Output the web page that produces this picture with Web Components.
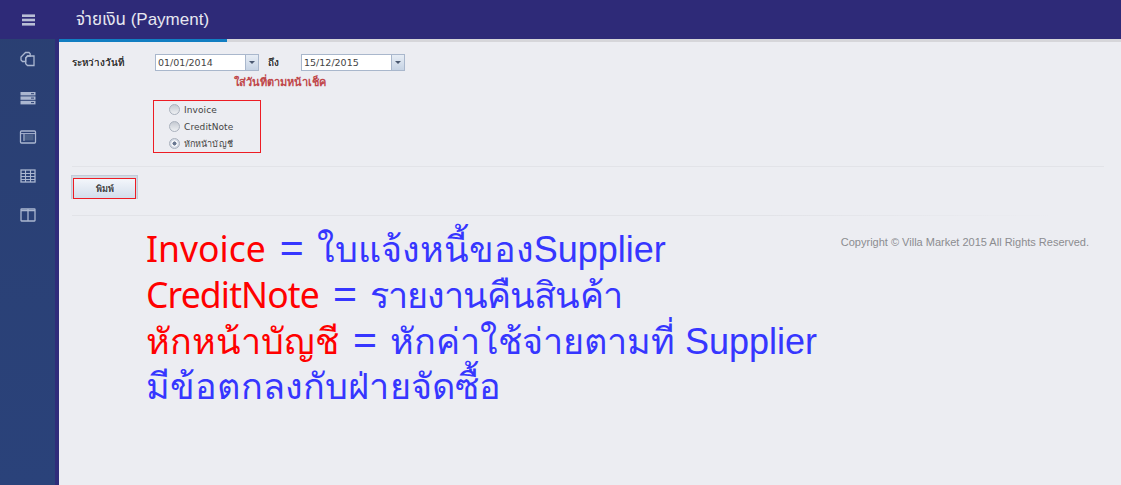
<!DOCTYPE html>
<html><head><meta charset="utf-8"><style>
html,body{margin:0;padding:0;height:100%;background:#ecedf2}
body{font-family:"Liberation Sans",Arial,"Noto Sans Thai","Noto Sans",sans-serif;overflow:hidden}
</style></head><body>
<app-shell>
<side-bar slot="side"></side-bar>
<top-bar slot="top" title-text="จ่ายเงิน (Payment)"></top-bar>
<payment-form></payment-form>
<page-footer-note></page-footer-note>
</app-shell>
<script>
function def(name,html){customElements.define(name,class extends HTMLElement{constructor(){super();this.attachShadow({mode:'open'}).innerHTML=html.replace('%T',this.getAttribute('title-text')||'')}})}
def('app-shell',`<style>:host{display:grid;grid-template-columns:59px 1fr;height:485px;width:1121px}
.m{display:flex;flex-direction:column;min-width:0}</style><slot name="side"></slot><div class="m"><slot name="top"></slot><slot></slot></div>`);
const ic=(p)=>`<svg width="18" height="18" viewBox="0 0 18 18" fill="none" stroke="#aab6d0" stroke-width="1.3">${p}</svg>`;
def('side-bar',`<style>:host{display:flex;flex-direction:column;background:linear-gradient(#2a3f72,#2a427a);box-shadow:inset -4px 0 0 #2f2c7a;height:485px}
.h{height:39px;background:#2e2a78;display:flex;align-items:center;justify-content:center;padding-right:3px}
.i{height:39px;display:flex;align-items:center;justify-content:center;padding-right:3px}
.l{display:flex;flex-direction:column}</style>
<div class="h"><svg width="13" height="12" viewBox="0 0 13 12" fill="#b9bfd6"><rect width="13" height="2.6" y=".4"/><rect y="4.7" width="13" height="2.6"/><rect y="9" width="13" height="2.6"/></svg></div>
<div class="l">
<div class="i">${ic('<path d="M6.5 2.5h3.5l1.2 1.2V6H8.5L6.7 8v3.5H3.5L2 10V7z"/><path d="M8.5 6h6.5v9.5H8.5L6.7 13.8V8z"/>')}</div>
<div class="i">${ic('<rect x="1.5" y="3" width="15" height="3.4" fill="#aab6d0" stroke="none"/><rect x="1.5" y="7.4" width="15" height="3.4" fill="#aab6d0" stroke="none"/><rect x="1.5" y="11.8" width="15" height="3.6" fill="#aab6d0" stroke="none"/><path d="M12 4.7h3M12 9.1h3M12 13.6h3" stroke="#2a3f72" stroke-width="1"/>')}</div>
<div class="i">${ic('<rect x="1.5" y="3" width="15" height="12" rx="1"/><rect x="4" y="6.5" width="10.5" height="6" fill="#4b6088" stroke="none"/><path d="M1.5 5.6h15" stroke-width="1"/><path d="M5 6v7" stroke-width="1"/>')}</div>
<div class="i">${ic('<rect x="2" y="3" width="14" height="12"/><path d="M2 6.5h14M2 9.5h14M2 12.5h14M6.5 3v12M11.5 3v12" stroke-width="1.1"/>')}</div>
<div class="i">${ic('<rect x="2" y="3" width="14" height="12" rx=".5"/><path d="M9 3v12M2 4.6h14"/>')}</div>
</div>`);
def('top-bar',`<style>:host{display:block;flex:none}
.b{height:39px;background:#2e2a78;color:#e6e7f0;display:flex;align-items:center;padding-left:17px;font-size:17px;font-weight:400}
.p{height:3px;background:#d6d6da;display:flex}.p i{width:168px;background:#117ec2}</style>
<div class="b">%T</div><div class="p"><i></i></div>`);
customElements.define('date-field',class extends HTMLElement{constructor(){super();this.attachShadow({mode:'open'}).innerHTML=`<style>:host{display:flex;width:104px;height:17px;box-sizing:border-box;border:1px solid #a9b7cc;background:#fff}
.v{flex:1;font:9.5px "DejaVu Sans",sans-serif;color:#444;padding-left:2px;line-height:15px}
.a{width:12px;border-left:1px solid #a9b7cc;background:linear-gradient(#e7edf5,#c6d3e4);display:flex;align-items:center;justify-content:center}
.a:after{content:"";border:3px solid transparent;border-top-color:#4a5870;border-bottom:0}</style><div class="v">${this.getAttribute('value')}</div><div class="a"></div>`}});
customElements.define('radio-row',class extends HTMLElement{constructor(){super();const c=this.hasAttribute('checked');this.attachShadow({mode:'open'}).innerHTML=`<style>:host{display:flex;align-items:center;gap:4px;height:18px;font:9px "DejaVu Sans","Noto Sans",sans-serif;letter-spacing:.1px;color:#444}
.r{width:11px;height:11px;border-radius:50%;box-sizing:border-box;border:1px solid #aab1bd;background:${c?'radial-gradient(circle,#6a7891 0 1.8px,#fff 2.3px 2.8px,#d5dbe6 3.4px)':'linear-gradient(#c5cad2,#eef0f3)'}}</style><span class="r"></span><span><slot></slot></span>`}});
def('payment-form',`<style>:host{display:block;position:relative;padding:10px 17px 0 13px;font:9.8px "DejaVu Sans","Noto Sans",sans-serif;color:#333}
.row{display:flex;align-items:center;height:20px}
.lb{width:83px;text-shadow:0 0 .4px #333;color:#333}
.to{width:42px;padding-left:9px;box-sizing:border-box;text-shadow:0 0 .4px #333}
.note{color:#c0474a;font-weight:700;margin:4px 0 0 162px;height:14px;line-height:14px;font-size:11px}
.box{margin:10px 0 0 81px;width:108px;height:53px;box-sizing:border-box;border:1px solid #ed1c24;padding:0 0 0 15px;display:flex;flex-direction:column;justify-content:center}
hr{border:0;height:1px;background:#e2e3e8;margin:13px 0 0 0}
.btnw{margin:8px 0 0 -1px;width:67px;height:24px;box-sizing:border-box;border:1px solid #c3cbd8;border-bottom:0;background:#d3d9e3;padding:2px 1px 0 1px;display:flex}
.btn{flex:1;border:1px solid #ed1c24;background:linear-gradient(#f3f6fb,#d3deec);display:flex;align-items:center;justify-content:center;color:#444;font-size:9px;text-shadow:0 0 .4px #444}
hr.b{margin:16px 45px 0 0;background:linear-gradient(90deg,#e2e3e8 70%,#ecedf2)}
</style>
<div class="row"><span class="lb">ระหว่างวันที่</span><date-field value="01/01/2014"></date-field><span class="to">ถึง</span><date-field value="15/12/2015"></date-field></div>
<div class="note">ใส่วันที่ตามหน้าเช็ค</div>
<div class="box"><radio-row>Invoice</radio-row><radio-row>CreditNote</radio-row><radio-row checked>หักหน้าบัญชี</radio-row></div>
<hr>
<div class="btnw"><div class="btn">พิมพ์</div></div>
<hr class="b">`);
def('page-footer-note',`<style>:host{display:block;position:relative;flex:1}
.c{position:absolute;right:32px;top:20px;font:11px "Liberation Sans",sans-serif;color:#8b8c90}
.t{position:absolute;left:87px;top:10px;font:36px/45.3px "Liberation Sans","Noto Sans",sans-serif;color:#3636ff;white-space:nowrap}
.t b{font-weight:400;color:#f00;font-family:"Noto Sans","Liberation Sans",sans-serif;font-size:35.5px}
.t b.n{letter-spacing:-.85px}
.t b.th{font-family:"Liberation Sans","Noto Sans",sans-serif;font-size:36px}
.e{font-size:41px;margin:0 3px 0 4px;line-height:1}
.s{letter-spacing:-.95px}.w{letter-spacing:.14px}</style>
<div class="c">Copyright © Villa Market 2015 All Rights Reserved.</div>
<div class="t"><b>Invoice</b> <span class="e">=</span> ใบแจ้งหนี้ของSupplier<br><b class="n">CreditNote</b> <span class="e">=</span> <span class="s">รายงานคืนสินค้า</span><br><b class="th">หักหน้าบัญชี</b> <span class="e">=</span> หักค่าใช้จ่ายตามที่ Supplier<br><span class="w">มีข้อตกลงกับฝ่ายจัดซื้อ</span></div>`);
</script></body></html>
